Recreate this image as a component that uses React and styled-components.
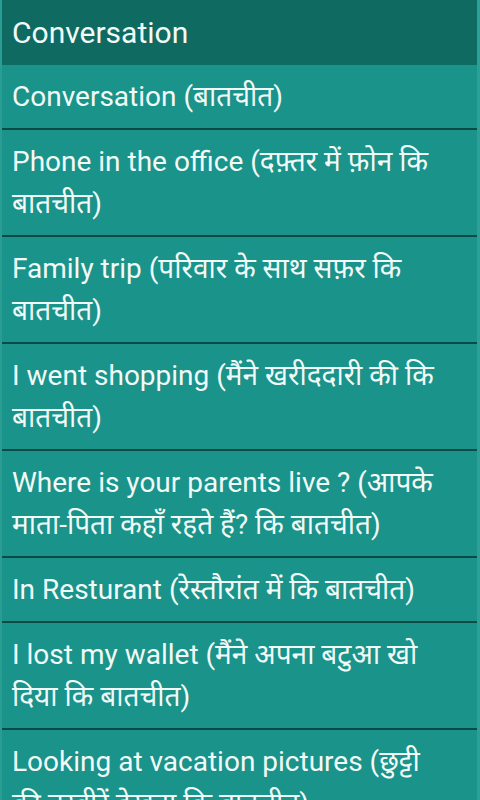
import React from "react";
import styled, { createGlobalStyle } from "styled-components";

const Global = createGlobalStyle`
  html, body { margin: 0; padding: 0; background: #1a938a; }
  body { font-family: Roboto, "Noto Sans Devanagari", "Noto Sans", "DejaVu Sans", sans-serif; }
`;

const Screen = styled.div`
  width: 480px;
  height: 800px;
  overflow: hidden;
  background: #1a938a;
  display: flex;
  flex-direction: column;
  box-sizing: border-box;
  border-left: 2px solid #2a9d93;
  border-right: 3px solid #2aa096;
`;

const Header = styled.header`
  flex: none;
  height: 65px;
  line-height: 65px;
  padding: 0 10px;
  background: #0f6a62;
  color: #f2faf8;
  font-size: 30px;
  font-weight: 400;
  white-space: nowrap;
`;

const List = styled.ul`
  list-style: none;
  margin: 0;
  padding: 0;
  display: flex;
  flex-direction: column;
`;

const Row = styled.li`
  padding: 11px 10px 10px 10px;
  border-top: 2px solid #0c4a45;
  background: #1a938a;
  color: #f2faf8;
  font-size: 28px;
  line-height: 42px;
  &:first-child { border-top: none; }
`;

const items = [
  ["Conversation (बातचीत)"],
  ["Phone in the office (दफ़्तर में फ़ोन कि", "बातचीत)"],
  ["Family trip (परिवार के साथ सफ़र कि", "बातचीत)"],
  ["I went shopping (मैंने खरीददारी की कि", "बातचीत)"],
  ["Where is your parents live ? (आपके", "माता-पिता कहाँ रहते हैं? कि बातचीत)"],
  ["In Resturant (रेस्तौरांत में कि बातचीत)"],
  ["I lost my wallet (मैंने अपना बटुआ खो", "दिया कि बातचीत)"],
  ["Looking at vacation pictures (छुट्टी", "की तस्वीरें देखना कि बातचीत)"],
];

export default function App() {
  return (
    <>
      <Global />
      <Screen>
        <Header>Conversation</Header>
        <List>
          {items.map((lines, i) => (
            <Row key={i}>
              {lines.map((l, j) => (
                <React.Fragment key={j}>
                  {j > 0 && <br />}
                  {l}
                </React.Fragment>
              ))}
            </Row>
          ))}
        </List>
      </Screen>
    </>
  );
}
